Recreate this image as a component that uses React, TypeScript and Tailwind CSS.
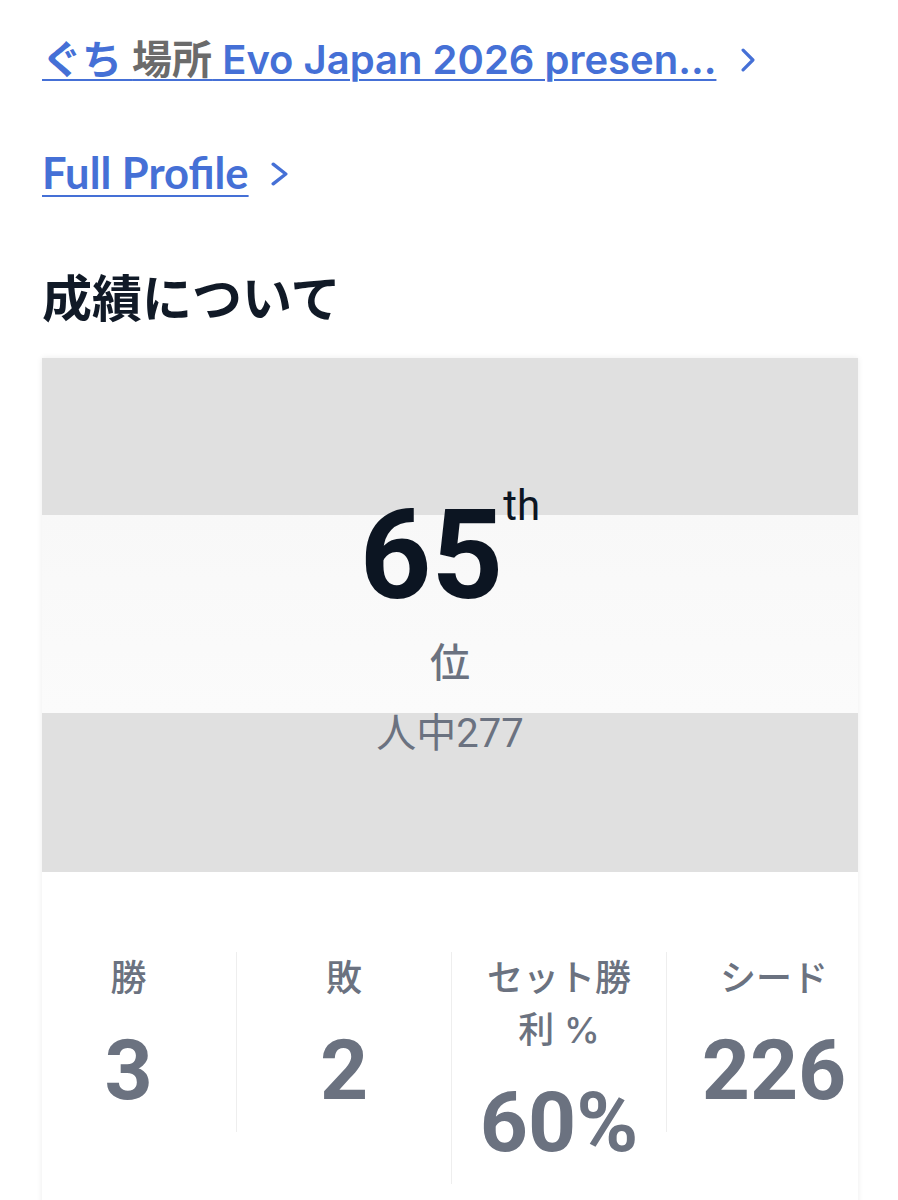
import React from "react";

function Chevron({ className, w = 14, h = 24, sw = 3.2 }: { className?: string; w?: number; h?: number; sw?: number }) {
  return (
    <svg className={className} width={w} height={h} viewBox={`0 0 ${w} ${h}`} fill="none">
      <path
        d={`M${sw / 2 + 0.5} ${sw / 2 + 0.5} L${w - sw / 2 - 0.5} ${h / 2} L${sw / 2 + 0.5} ${h - sw / 2 - 0.5}`}
        stroke="currentColor"
        strokeWidth={sw}
        strokeLinecap="round"
        strokeLinejoin="round"
      />
    </svg>
  );
}

function Stat({ label, value, first }: { label: string; value: string; first?: boolean }) {
  return (
    <div
      className={`flex flex-col items-center self-start px-[20px] pb-[19px] text-[#6b7280] ${
        first ? "" : "border-l border-[#eeeeee]"
      }`}
    >
      <div className="text-center text-[36px] leading-[52px] font-medium">{label}</div>
      <div className="mt-[25px] font-['Roboto',sans-serif] text-[84px] leading-none font-bold">{value}</div>
    </div>
  );
}

export default function App() {
  return (
    <div className="min-h-[1200px] overflow-hidden bg-white font-['Inter','Noto_Sans_CJK_JP',sans-serif]">
      <div className="pl-[42px] pr-[40px] pt-[36px]">
        <div className="flex items-center text-[40px] leading-[48px] font-semibold text-[#4570d6]">
          <span className="whitespace-nowrap underline decoration-2 underline-offset-[5px]">
            ぐち <span className="text-[#6b6b6b]">場所</span> Evo Japan 2026 presen...
          </span>
          <Chevron className="ml-[25px]" />
        </div>

        <div className="mt-[62px] flex items-center font-['Lato',sans-serif] text-[43.5px] leading-[52px] font-bold text-[#4570d6]">
          <span className="underline decoration-2 underline-offset-[6px]">Full Profile</span>
          <Chevron className="ml-[22px] mt-[4px]" w={17} h={24} sw={3.4} />
        </div>

        <h2 className="mt-[67px] font-['Noto_Sans_CJK_JP',sans-serif] text-[50px] leading-[60px] font-bold text-[#111a27]">
          成績について
        </h2>

        <div className="mt-[33px] bg-white shadow-[0_0_6px_rgba(0,0,0,0.08)]">
          <div className="flex h-[514px] flex-col items-center bg-[linear-gradient(to_bottom,#e0e0e0_157px,#f8f8f8_157px,#fbfbfb_355px,#e0e0e0_355px)] pt-[135px]">
            <div className="flex items-start font-['Roboto',sans-serif] text-[#0c1522]">
              <span className="text-[125px] leading-none font-bold">65</span>
              <span className="-mt-[8px] text-[42px] leading-none font-normal">th</span>
            </div>
            <div className="mt-[21px] text-[40px] leading-[48px] font-medium text-[#6b7280]">位</div>
            <div className="mt-[23px] font-['Roboto','Noto_Sans_CJK_JP',sans-serif] text-[40px] leading-[48px] font-normal text-[#6b7280]">
              人中277
            </div>
          </div>

          <div className="pt-[80px] pb-[40px]">
            <div className="ml-[-21px] grid w-[860px] grid-cols-4">
              <Stat label="勝" value="3" first />
              <Stat label="敗" value="2" />
              <Stat label="セット勝利 %" value="60%" />
              <Stat label="シード" value="226" />
            </div>
          </div>
        </div>
      </div>
    </div>
  );
}
